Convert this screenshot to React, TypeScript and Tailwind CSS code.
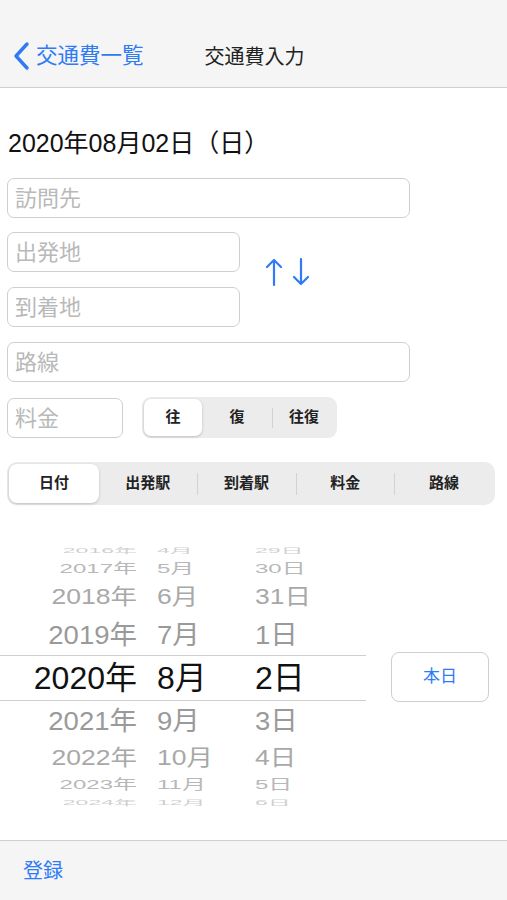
import React from "react";

const jp = { fontFamily: '"Liberation Sans", "Noto Sans CJK JP", sans-serif' };

type Row = { y: string; m: string; d: string; h: string; cls: string; scale: number };

const rows: Row[] = [
  { y: "2016年", m: "4月", d: "29日", h: "h-[16px]", cls: "text-[23px] text-[#d0d0d0]", scale: 0.3 },
  { y: "2017年", m: "5月", d: "30日", h: "h-[22px]", cls: "text-[24px] text-[#b8b8b8]", scale: 0.55 },
  { y: "2018年", m: "6月", d: "31日", h: "h-[34px]", cls: "text-[26.5px] text-[#a8a8a8]", scale: 0.82 },
  { y: "2019年", m: "7月", d: "1日", h: "h-[41px]", cls: "text-[27.5px] text-[#9a9a9a]", scale: 0.96 },
  { y: "2020年", m: "8月", d: "2日", h: "h-[46px]", cls: "text-[32px] text-[#111]", scale: 1 },
  { y: "2021年", m: "9月", d: "3日", h: "h-[40px]", cls: "text-[27.5px] text-[#9a9a9a]", scale: 0.96 },
  { y: "2022年", m: "10月", d: "4日", h: "h-[33px]", cls: "text-[26.5px] text-[#a8a8a8]", scale: 0.82 },
  { y: "2023年", m: "11月", d: "5日", h: "h-[21px]", cls: "text-[24px] text-[#b8b8b8]", scale: 0.55 },
  { y: "2024年", m: "12月", d: "6日", h: "h-[15px]", cls: "text-[23px] text-[#d0d0d0]", scale: 0.3 },
];

const Field = ({ label, w }: { label: string; w: string }) => (
  <div
    className={`${w} h-[40px] rounded-[7px] border border-[#cfcfcf] flex items-center pl-[7px] text-[22px] text-[#b9b9b9]`}
  >
    {label}
  </div>
);

const App = () => {
  const tabs = ["日付", "出発駅", "到着駅", "料金", "路線"];
  return (
    <div className="w-[507px] h-[900px] flex flex-col bg-white overflow-hidden" style={jp}>
      <header className="h-[88px] bg-[#f5f5f5] border-b border-[#cfcfcf] flex items-end pb-[15px]">
        <div className="flex items-center pl-[12px] text-[#2f7bf5]">
          <svg width="20" height="30" viewBox="0 0 20 30" fill="none">
            <path d="M15 3 L4 15 L15 27" stroke="#2f7bf5" strokeWidth="3.4" strokeLinecap="round" strokeLinejoin="round" />
          </svg>
          <span className="ml-[4px] text-[21.5px]">交通費一覧</span>
        </div>
        <span className="ml-[61px] text-[20px] text-[#222]">交通費入力</span>
      </header>

      <div className="pl-[7px]">
        <div className="mt-[40px] h-[30px] leading-[30px] text-[25px] text-[#111] pl-[1px]">2020年08月02日（日）</div>

        <div className="mt-[20px]">
          <Field label="訪問先" w="w-[403px]" />
        </div>

        <div className="mt-[14px] flex items-center">
          <div className="flex flex-col gap-[15px]">
            <Field label="出発地" w="w-[233px]" />
            <Field label="到着地" w="w-[233px]" />
          </div>
          <div className="ml-[25px] mb-[16px] flex gap-[9px]">
            <svg width="18" height="30" viewBox="0 0 18 30" fill="none" stroke="#2f7bf5" strokeWidth="2.2" strokeLinecap="round" strokeLinejoin="round">
              <path d="M9 28 V3 M2 10 L9 3 L16 10" />
            </svg>
            <svg width="18" height="30" viewBox="0 0 18 30" fill="none" stroke="#2f7bf5" strokeWidth="2.2" strokeLinecap="round" strokeLinejoin="round">
              <path d="M9 2 V27 M2 20 L9 27 L16 20" />
            </svg>
          </div>
        </div>

        <div className="mt-[15px]">
          <Field label="路線" w="w-[403px]" />
        </div>

        <div className="mt-[15px] flex items-start">
          <div className="mt-[1px]">
            <Field label="料金" w="w-[116px]" />
          </div>
          <div className="ml-[19px] w-[195px] h-[41px] rounded-[9px] bg-[#ececec] p-[2px] flex items-center text-[15px] font-bold text-[#222]">
            <div className="w-[58px] h-full rounded-[7px] bg-white shadow-[0_1px_3px_rgba(0,0,0,0.2)] flex items-center justify-center">往</div>
            <div className="w-[70px] flex items-center justify-center">復</div>
            <div className="w-px h-[20px] bg-[#d2d2d2]" />
            <div className="flex-1 flex items-center justify-center">往復</div>
          </div>
        </div>

        <div className="mt-[24px] w-[488px] h-[43px] rounded-[10px] bg-[#ececec] p-[2px] flex items-center text-[15px] font-semibold text-[#222]">
          {tabs.map((t, i) => (
            <React.Fragment key={t}>
              {i > 1 && <div className="w-px h-[22px] bg-[#d2d2d2]" />}
              <div
                className={
                  i === 0
                    ? "w-[90px] h-full rounded-[8px] bg-white shadow-[0_1px_3px_rgba(0,0,0,0.2)] flex items-center justify-center"
                    : "flex-1 h-full flex items-center justify-center"
                }
              >
                {t}
              </div>
            </React.Fragment>
          ))}
        </div>
      </div>

      <div className="mt-[37px] flex items-center">
        <div className="w-[366px] flex flex-col">
          {rows.map((r, i) => (
            <div
              key={r.y}
              className={`${r.h} flex items-center overflow-visible ${r.cls} ${i === 4 ? "border-y border-[#cfcfcf]" : ""}`}
            >
              <div className="w-[137px] text-right whitespace-nowrap" style={{ transform: `scaleY(${r.scale})` }}>
                {r.y}
              </div>
              <div className="ml-[20px] w-[98px] whitespace-nowrap" style={{ transform: `scaleY(${r.scale})` }}>
                {r.m}
              </div>
              <div className="whitespace-nowrap" style={{ transform: `scaleY(${r.scale})` }}>
                {r.d}
              </div>
            </div>
          ))}
        </div>
        <button className="ml-[25px] mt-[2px] w-[98px] h-[50px] rounded-[8px] border border-[#cfcfcf] bg-white text-[17px] text-[#2f7bf5]">
          本日
        </button>
      </div>

      <footer className="mt-auto h-[60px] bg-[#f5f5f5] border-t border-[#cfcfcf] flex items-center pl-[23px] text-[20px] text-[#2f7bf5]">
        登録
      </footer>
    </div>
  );
};

export default App;
